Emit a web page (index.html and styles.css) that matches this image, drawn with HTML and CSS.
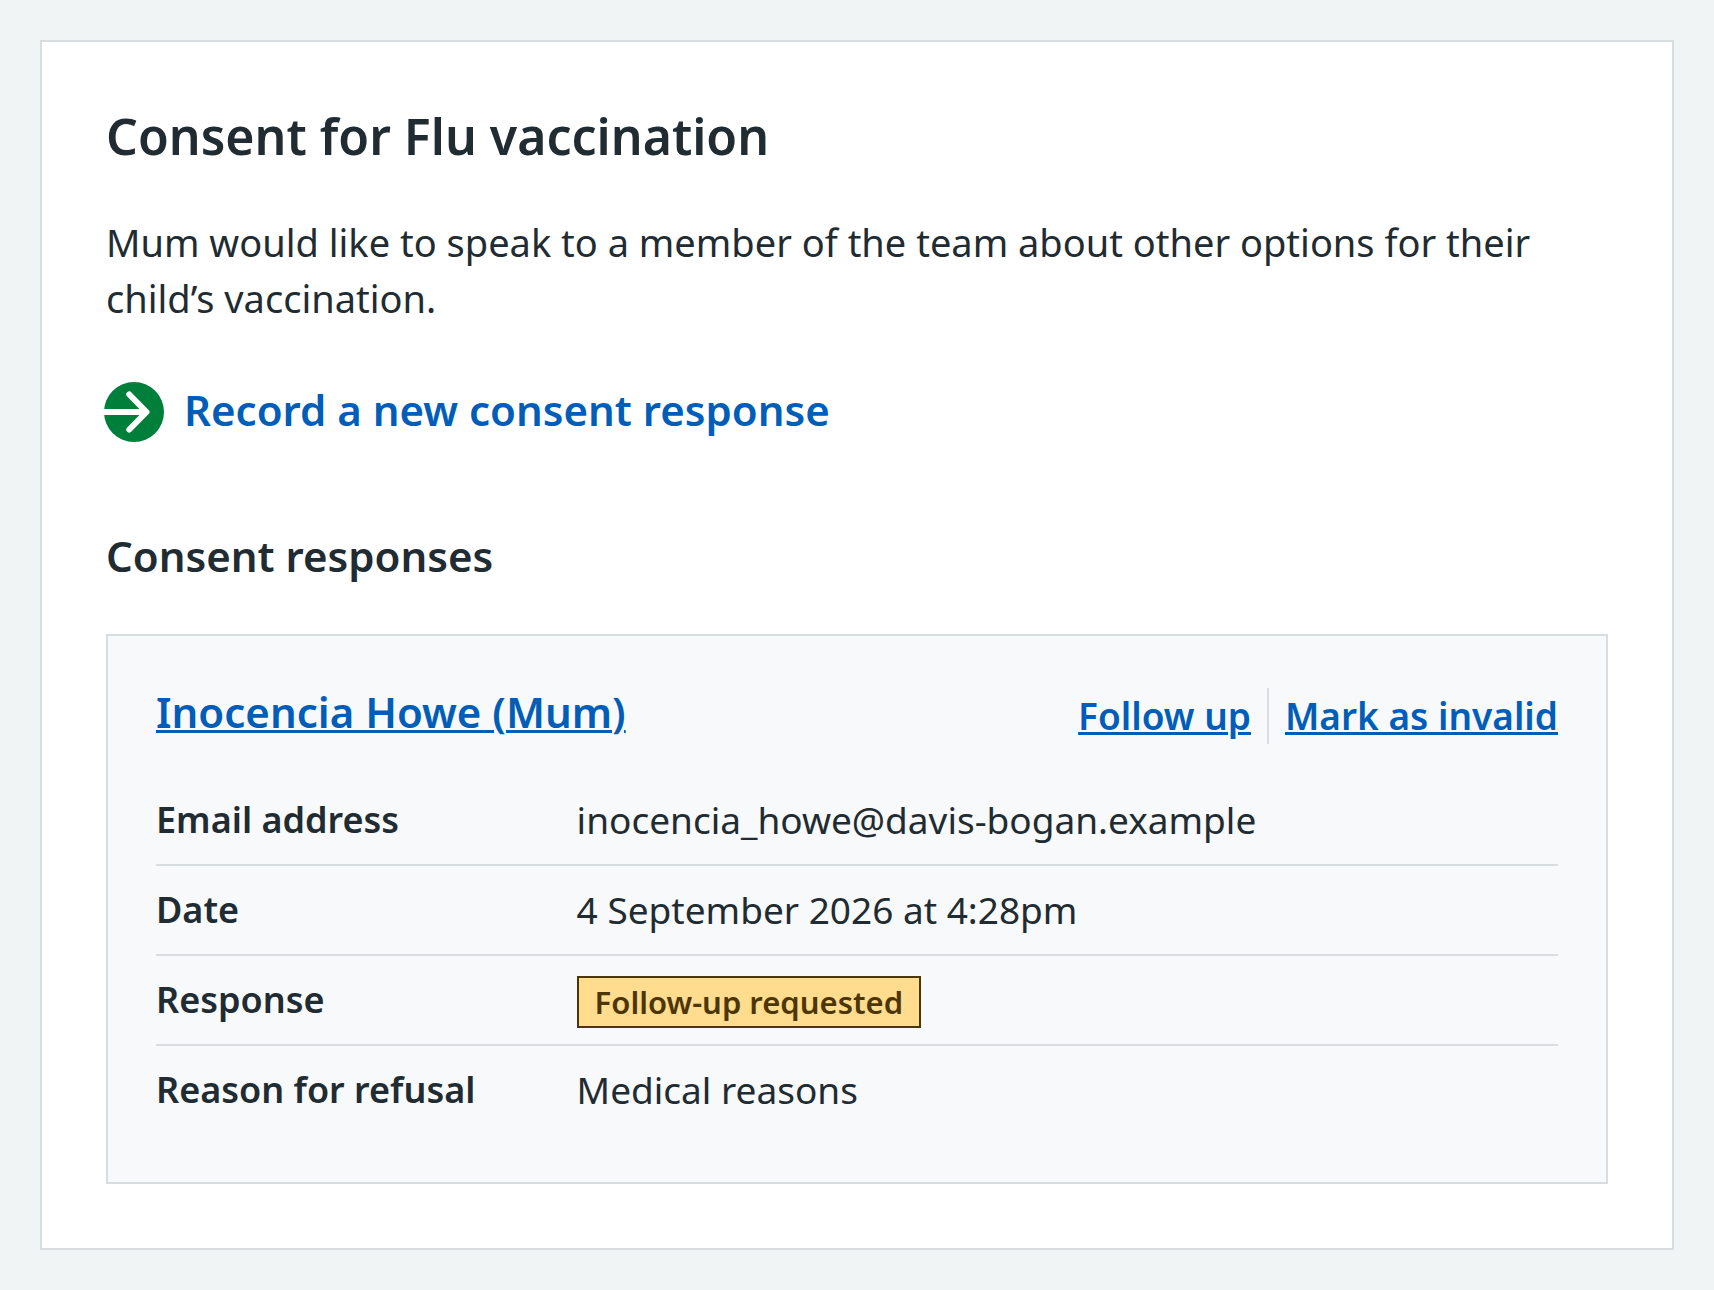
FILE: index.html
```html
<!DOCTYPE html>
<html lang="en">
<head>
    <meta charset="UTF-8">
    <meta name="viewport" content="width=device-width, initial-scale=1">
    <title>Consent for Flu vaccination</title>
    <link rel="stylesheet" href="styles.css">
</head>
<body>

    <main class="card">
        <h1>Consent for Flu vaccination</h1>
        <p class="intro">Mum would like to speak to a member of the team about other options for their child’s vaccination.</p>

        <a class="action-link" href="#record">
            <svg class="action-icon" viewBox="0 0 60 60" aria-hidden="true">
                <circle cx="30" cy="30" r="30" fill="#007f3b"/>
                <path d="M0 30H40M25.300 12.500L42.500 30L25.300 47.500" fill="none" stroke="#fff" stroke-width="6" stroke-linecap="round" stroke-linejoin="round"/>
            </svg>
            <span>Record a new consent response</span>
        </a>

        <h2>Consent responses</h2>

        <section class="response">
            <div class="response-header">
                <h3><a href="#response">Inocencia Howe (Mum)</a></h3>
                <ul class="actions">
                    <li><a href="#follow-up">Follow up</a></li>
                    <li><a href="#invalid">Mark as invalid</a></li>
                </ul>
            </div>

            <dl class="summary">
                <div class="row">
                    <dt>Email address</dt>
                    <dd>inocencia_howe@davis-bogan.example</dd>
                </div>
                <div class="row">
                    <dt>Date</dt>
                    <dd>4 September 2026 at 4:28pm</dd>
                </div>
                <div class="row">
                    <dt>Response</dt>
                    <dd><strong class="tag">Follow-up requested</strong></dd>
                </div>
                <div class="row">
                    <dt>Reason for refusal</dt>
                    <dd>Medical reasons</dd>
                </div>
            </dl>
        </section>
    </main>

</body>
</html>
```
FILE: styles.css
```css
* {
    box-sizing: border-box;
}
body {
    margin: 0;
    padding: 40px;
    background-color: #f0f4f5;
    color: #212b32;
    font-family: "Frutiger W01", "Noto Sans", Arial, sans-serif;
    font-size: 38px;
    line-height: 56px;
}
h1, h2, h3, p, ul, dl, dd {
    margin: 0;
    padding: 0;
}
h1, h2, h3, dt, .actions, .action-link, .tag {
    font-weight: 600;
}
a {
    color: #005eb8;
    text-decoration-thickness: 3px;
}
.card {
    padding: 64px;
    background-color: #fff;
    border: 2px solid #d8dde0;
}
h1 {
    font-size: 50px;
    line-height: 60px;
    margin-bottom: 48px;
}
.intro {
    margin-bottom: 56px;
}
.action-link {
    display: flex;
    align-items: flex-start;
    width: fit-content;
    gap: 20px;
    margin-left: -2px;
    font-size: 42px;
    text-decoration: none;
}
.action-icon {
    flex-shrink: 0;
    width: 60px;
    height: 60px;
}
h2 {
    font-size: 42px;
    margin-top: 86px;
    margin-bottom: 50px;
}

/* response card */
.response {
    padding: 48px;
    background-color: #f8f9fb;
    border: 2px solid #d8dde0;
}
.response-header {
    display: flex;
    justify-content: space-between;
    align-items: flex-start;
    margin-bottom: 32px;
}
h3 {
    font-size: 42px;
}
.actions {
    display: flex;
    padding-top: 4px;
    font-size: 37px;
    list-style: none;
}
.actions li + li {
    margin-left: 16px;
    padding-left: 16px;
    border-left: 2px solid #d8dde0;
}
.row {
    display: grid;
    grid-template-columns: 30% 1fr;
    padding: 16px 0;
    border-bottom: 2px solid #d8dde0;
}
.row:last-child {
    border-bottom: none;
}
dt {
    font-size: 36px;
}
dd {
    font-size: 37px;
}
.tag {
    display: block;
    width: fit-content;
    margin-top: 4px;
    padding: 0 16px;
    background-color: #ffdc8e;
    border: 2px solid #4d3605;
    color: #4d3605;
    font-size: 31px;
    line-height: 48px;
}
```
